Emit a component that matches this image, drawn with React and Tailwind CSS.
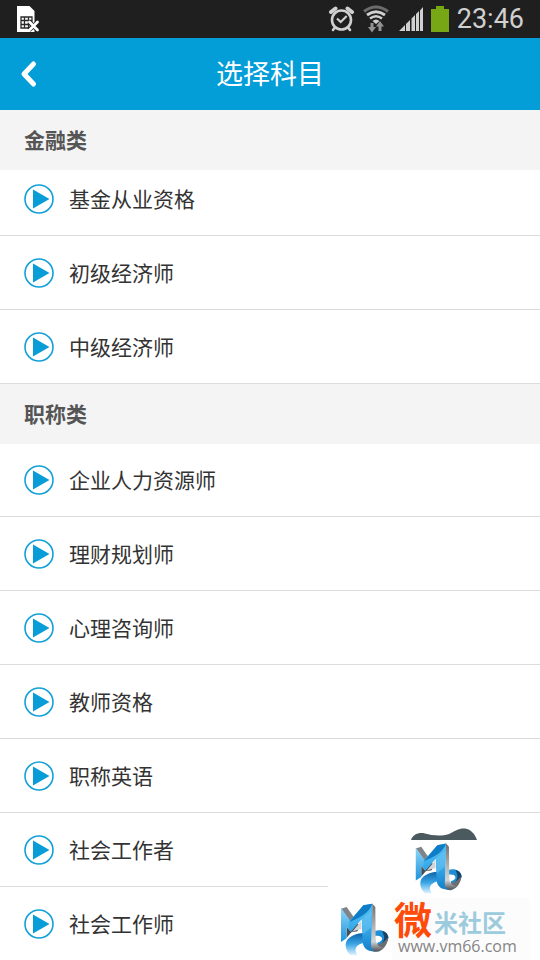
import React from 'react'

const sections = [
  {
    title: '金融类',
    listClass: '-mt-2',
    items: ['基金从业资格', '初级经济师', '中级经济师'],
  },
  {
    title: '职称类',
    listClass: '-mt-px',
    items: [
      '企业人力资源师',
      '理财规划师',
      '心理咨询师',
      '教师资格',
      '职称英语',
      '社会工作者',
      '社会工作师',
    ],
  },
]

function SimIcon() {
  return (
    <svg className="h-7 w-6" viewBox="0 0 24 28" aria-hidden="true">
      <path d="M1 1h12.500l5 5v21H1z" fill="#fff" />
      <path d="M5 12h11v11H5zM8.500 12v11M12.500 12v11M5 15.500h11M5 19.500h11" fill="none" stroke="#2a2a2a" strokeWidth="1.300" />
      <path d="M13 17l9 8M22 17l-9 8" stroke="#1f1f1f" strokeWidth="4.500" />
      <path d="M13.500 17l8 8M21.500 17l-8 8" stroke="#fff" strokeWidth="2.800" strokeLinecap="round" />
    </svg>
  )
}

function AlarmIcon() {
  return (
    <svg className="h-[26px] w-[26px]" viewBox="0 0 26 26" fill="none" stroke="#d0d0d0" aria-hidden="true">
      <circle cx="12.500" cy="14" r="9.500" strokeWidth="2.600" />
      <path d="M8 12.500l3.700 3.500 6-6" strokeWidth="2.200" />
      <path d="M2 6l4.500-3.500M18.500 2.500L23 6" strokeWidth="4" strokeLinecap="round" />
      <path d="M5.500 22L4 24M19.500 22l1.500 2" strokeWidth="2.600" strokeLinecap="round" />
    </svg>
  )
}

function WifiIcon() {
  return (
    <svg className="h-7 w-7" viewBox="0 0 28 28" fill="none" aria-hidden="true">
      <path d="M1 6.500Q13-2.500 25 6.500" stroke="#6c6c6c" strokeWidth="3" />
      <path d="M4 10Q13 3.500 22 10" stroke="#d0d0d0" strokeWidth="2.800" />
      <path d="M7 13.500Q13 9 19 13.500" stroke="#d0d0d0" strokeWidth="2.600" />
      <path d="M9.500 16Q13 13 16.500 16L13 19z" fill="#d0d0d0" />
      <path d="M7.500 18h3v4H13l-4 5.500L5 22h2.500zM17 16l4 5.500h-2.500V26h-3v-4.500H13z" fill="#929292" />
    </svg>
  )
}

function SignalIcon() {
  return (
    <svg className="h-6 w-6" viewBox="0 0 24 24" fill="#d0d0d0" aria-hidden="true">
      <path d="M0 24l6-6v6zM7 17l4-4v11H7zM12.500 11.500l3.500-3.500v16h-3.500zM17 7l3-3v20h-3zM21 3.500L24 0v24h-3z" />
    </svg>
  )
}

function BatteryIcon() {
  return (
    <svg className="h-[26px] w-[18px]" viewBox="0 0 18 26" fill="#78a716" aria-hidden="true">
      <path d="M5 0h8v3h5v23H0V3h5z" />
    </svg>
  )
}

function PlayIcon() {
  return (
    <svg className="h-[30px] w-[30px] shrink-0" viewBox="0 0 30 30" aria-hidden="true">
      <circle cx="15" cy="15" r="14" fill="none" stroke="#13a0d8" strokeWidth="1.600" />
      <path d="M9 5.500v19l16.500-9.500z" fill="#099dd8" />
    </svg>
  )
}

// Ribbon shaped "Mb" mark
function RibbonLogo({ id, className }) {
  return (
    <svg className={className} viewBox="0 0 168 180" aria-hidden="true">
      <defs>
        <linearGradient id={`${id}-face`} x1="0" y1="0" x2="0" y2="1">
          <stop offset="0" stopColor="#56bdf0" />
          <stop offset=".45" stopColor="#3aaeec" />
          <stop offset="1" stopColor="#1480cc" />
        </linearGradient>
        <linearGradient id={`${id}-leg`} x1="0" y1="0" x2="0" y2="1">
          <stop offset="0" stopColor="#8fd6f8" />
          <stop offset="1" stopColor="#1c93dc" />
        </linearGradient>
        <linearGradient id={`${id}-side`} x1="0" y1="0" x2="0" y2="1">
          <stop offset="0" stopColor="#6b6c6e" />
          <stop offset=".5" stopColor="#b4b5b7" />
          <stop offset=".8" stopColor="#d3d4d6" />
          <stop offset="1" stopColor="#55565a" />
        </linearGradient>
        <linearGradient id={`${id}-tail`} x1="0" y1="0" x2="0" y2="1">
          <stop offset="0" stopColor="#0c62a8" />
          <stop offset=".5" stopColor="#3aa5e6" />
          <stop offset="1" stopColor="#e2f5fe" />
        </linearGradient>
      </defs>
      {/* tail and loop behind the letter */}
      <path d="M94 98C58 98 29 112 29 134c0 13 7 25 16 32h20c-12-18-8-34 30-40z" fill={`url(#${id}-tail)`} />
      <path d="M116 93c20-6 36 0 41 18 0 15-11 26-33 26v-9c9-2 15-7 14-13-2-7-10-9-22-7z" fill="#1e8fd6" />
      <path d="M138 93c11 2 18 9 19 18-1 12-12 23-29 26 12-8 18-18 16-27-1-6-3-11-6-17z" fill="#1a4466" />
      <path d="M157 111c-2 22-13 38-30 44-10 2-20-1-26-8l8-16c9 6 30 5 48-20z" fill="#6d6e72" />
      {/* grey inner sides */}
      <path d="M15 26l17-5 21 30-10 14z" fill="#808488" />
      <path d="M32 80l12 14 18-25 10 8-8 17-18 3-14 16z" fill="#4a4c50" />
      <path d="M48 96l27-32 2 24c-12 1-20 4-29 8z" fill="#d4d5d8" />
      {/* faces */}
      <path d="M15 24l28 38 1 33-12-14v34l-17 11z" fill={`url(#${id}-leg)`} />
      <path d="M40 64l42-48 27-5-2 104c0 19 5 31 16 39-24 2-42-7-43-29l-3-67-33 38-6-14z" fill={`url(#${id}-face)`} />
      <path d="M109 11C98 42 70 52 40 66l42-50z" fill="#0f7cc6" />
      <path d="M78 56l29-24-1 50-26 22z" fill="#7fcdf6" opacity=".4" />
      <path d="M109 11l9 10 1 92c0 20 10 29 24 30-8 9-21 13-31 9-8-5-8-20-5-38z" fill={`url(#${id}-side)`} />
    </svg>
  )
}

function StatusBar() {
  return (
    <div className="flex h-[38px] shrink-0 items-center justify-between bg-[#1f1f1f] px-4">
      <SimIcon />
      <div className="flex items-center gap-2">
        <AlarmIcon />
        <WifiIcon />
        <SignalIcon />
        <BatteryIcon />
        <span className="font-['Roboto',sans-serif] text-[27px] leading-8 text-[#d0d0d0]">23:46</span>
      </div>
    </div>
  )
}

function TitleBar() {
  return (
    <header className="grid h-[72px] shrink-0 grid-cols-[1fr_auto_1fr] items-center bg-[#039dd8] px-5">
      <button type="button" aria-label="返回" className="justify-self-start">
        <svg className="h-7 w-5" viewBox="0 0 20 28" fill="none" stroke="#fff" strokeWidth="5" strokeLinecap="round" strokeLinejoin="round">
          <path d="M13.500 4L4 14l9.500 10" />
        </svg>
      </button>
      <h1 className="pb-0.5 text-[27px] leading-9 text-white">选择科目</h1>
    </header>
  )
}

function SubjectRow({ name }) {
  return (
    <li className="border-b border-[#dcdcdc]">
      <button type="button" className="flex h-[73px] w-full items-center gap-[15px] px-6 text-left text-[21px] text-[#333]">
        <PlayIcon />
        {name}
      </button>
    </li>
  )
}

function Watermark() {
  return (
    <aside className="absolute right-0 bottom-0 w-[212px]">
      <svg className="ml-[83px] block h-3 w-[66px]" viewBox="0 0 66 12" aria-hidden="true">
        <path d="M0 12C2 6 8 4 14 5.500c7 2 16 3 24 .5C44 3 48 0 54 .5c6 .5 10 6 12 11.500z" fill="#4b5a5e" />
      </svg>
      <div className="bg-white pl-2">
        <RibbonLogo id="top" className="ml-[74px] h-[58px] w-14" />
        <div className="flex h-[62px] items-end">
          <RibbonLogo id="main" className="h-[60px] w-14" />
          <div className="w-[138px] self-stretch bg-[#fcfcfc] pt-0.5 pl-0.5">
            <p className="flex items-end text-[#9ccbdd]">
              <span className="text-[38px] leading-9 font-bold text-[#ff4b0a]">微</span>
              <span className="pl-0.5 text-[24px] leading-7 font-bold">米社区</span>
            </p>
            <a href="#" className="block pt-0.5 pl-1 font-['Open_Sans',sans-serif] text-[16px] leading-4 text-[#858585]">www.vm66.com</a>
          </div>
        </div>
      </div>
    </aside>
  )
}

export default function App() {
  return (
    <div className="relative flex h-screen flex-col overflow-hidden bg-white font-['Noto_Sans_CJK_SC',sans-serif]">
      <StatusBar />
      <TitleBar />
      <main className="min-h-0 flex-1 overflow-hidden">
        {sections.map((section) => (
          <section key={section.title}>
            <h2 className="relative z-10 flex h-[60px] items-center bg-[#f4f4f4] px-6 text-[21px] font-bold text-[#555]">
              {section.title}
            </h2>
            <ul className={section.listClass}>
              {section.items.map((name) => (
                <SubjectRow key={name} name={name} />
              ))}
            </ul>
          </section>
        ))}
      </main>
      <Watermark />
    </div>
  )
}
